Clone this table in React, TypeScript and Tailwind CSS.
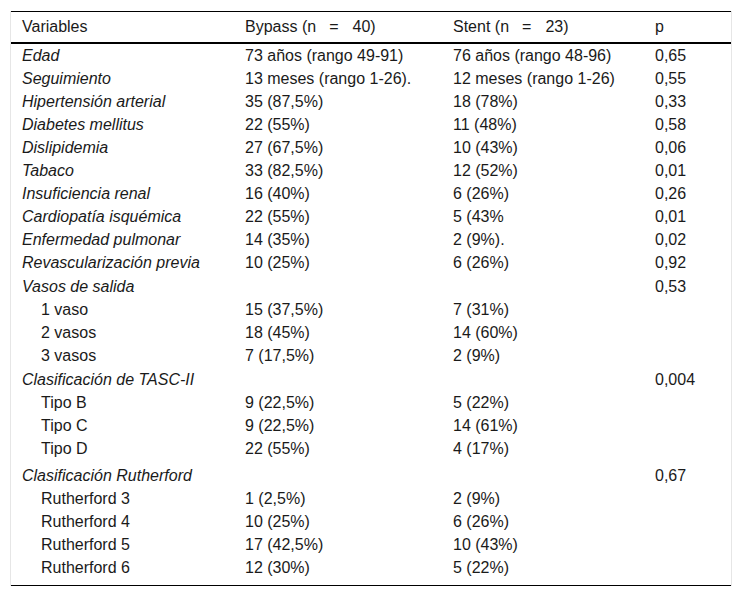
import React from "react";

type Row = { label: string; a?: string; b?: string; p?: string; italic?: boolean; indent?: boolean; extra?: string };

const rows: Row[] = [
  { label: "Edad", a: "73 años (rango 49-91)", b: "76 años (rango 48-96)", p: "0,65", italic: true },
  { label: "Seguimiento", a: "13 meses (rango 1-26).", b: "12 meses (rango 1-26)", p: "0,55", italic: true },
  { label: "Hipertensión arterial", a: "35 (87,5%)", b: "18 (78%)", p: "0,33", italic: true },
  { label: "Diabetes mellitus", a: "22 (55%)", b: "11 (48%)", p: "0,58", italic: true },
  { label: "Dislipidemia", a: "27 (67,5%)", b: "10 (43%)", p: "0,06", italic: true },
  { label: "Tabaco", a: "33 (82,5%)", b: "12 (52%)", p: "0,01", italic: true },
  { label: "Insuficiencia renal", a: "16 (40%)", b: "6 (26%)", p: "0,26", italic: true },
  { label: "Cardiopatía isquémica", a: "22 (55%)", b: "5 (43%", p: "0,01", italic: true },
  { label: "Enfermedad pulmonar", a: "14 (35%)", b: "2 (9%).", p: "0,02", italic: true },
  { label: "Revascularización previa", a: "10 (25%)", b: "6 (26%)", p: "0,92", italic: true },
  { label: "Vasos de salida", p: "0,53", italic: true, extra: "pt-[1px]" },
  { label: "1 vaso", a: "15 (37,5%)", b: "7 (31%)", indent: true },
  { label: "2 vasos", a: "18 (45%)", b: "14 (60%)", indent: true },
  { label: "3 vasos", a: "7 (17,5%)", b: "2 (9%)", indent: true },
  { label: "Clasificación de TASC-II", p: "0,004", italic: true, extra: "pt-[1px]" },
  { label: "Tipo B", a: "9 (22,5%)", b: "5 (22%)", indent: true },
  { label: "Tipo C", a: "9 (22,5%)", b: "14 (61%)", indent: true },
  { label: "Tipo D", a: "22 (55%)", b: "4 (17%)", indent: true },
  { label: "Clasificación Rutherford", p: "0,67", italic: true, extra: "pt-[4px]" },
  { label: "Rutherford 3", a: "1 (2,5%)", b: "2 (9%)", indent: true },
  { label: "Rutherford 4", a: "10 (25%)", b: "6 (26%)", indent: true },
  { label: "Rutherford 5", a: "17 (42,5%)", b: "10 (43%)", indent: true },
  { label: "Rutherford 6", a: "12 (30%)", b: "5 (22%)", indent: true },
];

export default function App() {
  return (
    <div className="w-[742px] h-[597px] bg-white pt-[11px] pl-[10px]" style={{ fontFamily: '"Liberation Sans", Arial, sans-serif' }}>
      <div className="w-[722px] border-x border-[#e6e6e6] text-[16px] text-[#1a1a1a]">
        <div className="grid grid-cols-[223px_208px_202px_1fr] border-t border-black border-b-2 h-[33px] items-center pl-[11px]">
          <div>Variables</div>
          <div>Bypass (n<span className="pl-[13px] pr-[14px]">=</span>40)</div>
          <div>Stent (n<span className="pl-[13px] pr-[14px]">=</span>23)</div>
          <div>p</div>
        </div>
        <div className="border-b border-black pb-[6px]">
          {rows.map((r, i) => (
            <div key={i} className={`grid grid-cols-[223px_208px_202px_1fr] leading-[23px] pl-[11px] ${r.extra ?? ""}`}>
              <div className={`${r.italic ? "italic" : ""} ${r.indent ? "pl-[19px]" : ""}`}>{r.label}</div>
              <div>{r.a ?? ""}</div>
              <div>{r.b ?? ""}</div>
              <div>{r.p ?? ""}</div>
            </div>
          ))}
        </div>
      </div>
    </div>
  );
}
